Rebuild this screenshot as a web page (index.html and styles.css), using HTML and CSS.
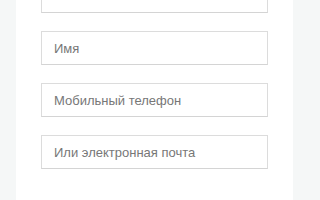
FILE: index.html
```html
<!DOCTYPE html>
<html lang="ru">
<head>
    <meta charset="UTF-8">
    <meta name="viewport" content="width=device-width, initial-scale=1.0">
    <title>Регистрация</title>
    <link rel="stylesheet" href="styles.css">
</head>
<body>
    <div class="container">
        <form class="content">
            <input class="form-input" type="password">
            <input class="form-input" type="text" placeholder="Имя">
            <input class="form-input" type="text" placeholder="Мобильный телефон">
            <input class="form-input" type="text" placeholder="Или электронная почта">
        </form>
    </div>
</body>
</html>
```
FILE: styles.css
```css
body {
    margin: 0;
    background: #f5f7f7;
    font-family: Arial, "Liberation Sans", sans-serif;
}
.container {
    width: 277px;
    margin-left: 16px;
    overflow: hidden;
    height: 200px;
}
.content {
    background: #fff;
    padding: 0 25px 40px;
    margin-top: -21px;
    display: flex;
    flex-direction: column;
    gap: 18px;
}
.form-input {
    box-sizing: border-box;
    width: 227px;
    height: 34px;
    margin: 0;
    padding: 0 12px;
    border: 1px solid #dcdcdc;
    border-bottom-color: #d4d4d4;
    border-radius: 0;
    font-family: Arial, "Liberation Sans", sans-serif;
    font-size: 13px;
    color: #555;
    outline: none;
}
.form-input::placeholder {
    color: #777;
}
```
